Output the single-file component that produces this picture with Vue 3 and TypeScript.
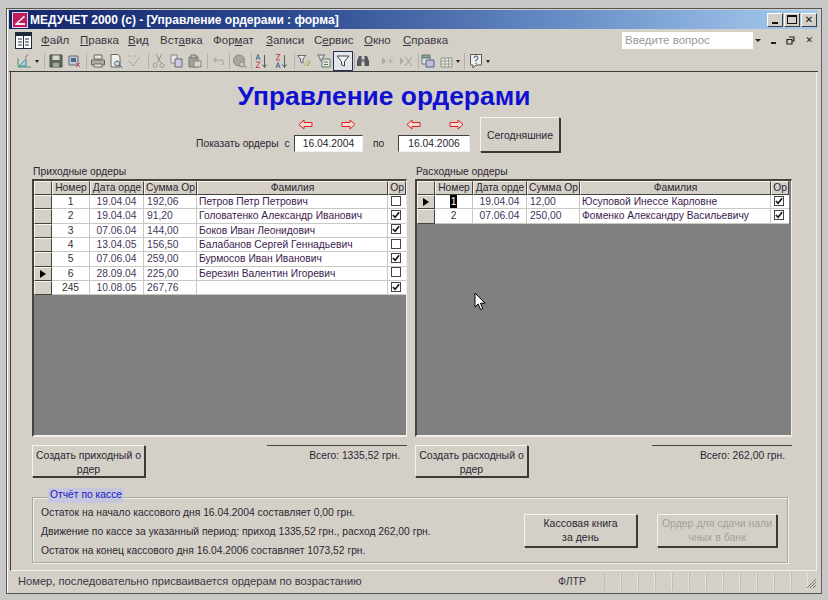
<script setup lang="ts">
type Shape = { d: string; f?: string; s?: string };
type Tool = { id: string; w: number; sep?: boolean; arrow?: boolean; active?: boolean; shapes?: Shape[] };

const tools: Tool[] = [
  { id: 'wiz', w: 25, arrow: true, shapes: [
    { d: 'M2 14V5M2 14H15', s: '#2f8a6a' }, { d: 'M3 13L10 6V13Z', f: '#9fd8c8', s: '#2f7f8f' }, { d: 'M9 5L12 1.5', s: '#c03a3a' } ] },
  { id: 's1', w: 7, sep: true },
  { id: 'save', w: 18, shapes: [
    { d: 'M2 2H14V14H2Z', f: '#4a5a4a', s: '#333' }, { d: 'M4.5 2.5H11.5V7H4.5Z', f: '#d8d8d0' }, { d: 'M5 10H11V14H5Z', f: '#9aa09a' } ] },
  { id: 'form', w: 18, shapes: [
    { d: 'M3 3H12V12H3Z', f: '#b9c9d4', s: '#556' }, { d: 'M5 5H10V9H5Z', f: '#3a5a7a' }, { d: 'M10 10L14 14M14 10L10 14', s: '#c2305a' } ] },
  { id: 's2', w: 6, sep: true },
  { id: 'print', w: 18, shapes: [
    { d: 'M4 2H12V6H4Z', f: '#e8e8e2', s: '#555' }, { d: 'M1.5 7H14.5V12H1.5Z', f: '#a8a8a0', s: '#555' }, { d: 'M4 11H12V14H4Z', f: '#eee', s: '#555' } ] },
  { id: 'prev', w: 18, shapes: [
    { d: 'M3 1.5H10L12 4V14H3Z', f: '#f4f4f0', s: '#555' }, { d: 'M9 8a2.5 2.5 0 1 0 .01 0Z', f: '#c8e0e8', s: '#345' }, { d: 'M11 12L14.5 15', s: '#345' } ] },
  { id: 'spell', w: 20, shapes: [
    { d: 'M2 3H5M7 3H10M12 3H14', s: '#a8a8a4' }, { d: 'M3 8L7 13L13 5', s: '#9c9c98' } ] },
  { id: 's3', w: 5, sep: true },
  { id: 'cut', w: 18, shapes: [
    { d: 'M5 1L10 10M11 1L6 10', s: '#8a8a88' }, { d: 'M4 10.5a2 2 0 1 0 .01 0ZM11 10.5a2 2 0 1 0 .01 0Z', s: '#8a8a88' } ] },
  { id: 'copy', w: 18, shapes: [
    { d: 'M2 2H8V10H2Z', f: '#ecece6', s: '#777' }, { d: 'M6 6H13V14H6Z', f: '#c9c9ea', s: '#556' } ] },
  { id: 'paste', w: 18, shapes: [
    { d: 'M2 4H11V14H2Z', f: '#9b9b90', s: '#666' }, { d: 'M4 2H9V5H4Z', f: '#bbb', s: '#666' }, { d: 'M7 8H14V14H7Z', f: '#d8d8d4', s: '#777' } ] },
  { id: 's4', w: 6, sep: true },
  { id: 'undo', w: 16, shapes: [ { d: 'M5 7H11Q13.5 7 13.5 10Q13.5 12 11 12M5 4.5V9.5L2.5 7Z', s: '#9c9c98' } ] },
  { id: 's5', w: 5, sep: true },
  { id: 'web', w: 18, shapes: [
    { d: 'M7 2a5.5 5.5 0 1 0 .01 0Z', f: '#a0a09a', s: '#777' }, { d: 'M10 9a2.5 2.5 0 1 0 .01 0Z', f: '#c8c8c4', s: '#777' }, { d: 'M11.5 12.5L15 15', s: '#777' } ] },
  { id: 's6', w: 3, sep: true },
  { id: 'az', w: 20, shapes: [
    { d: 'M3 7L5 1.5L7 7M3.8 5H6.2', s: '#2a5a9a' }, { d: 'M3 9H7L3 14.5H7', s: '#c03030' }, { d: 'M11.5 2V14M9.5 11.5L11.5 14.5L13.5 11.5', s: '#3a4a4a' } ] },
  { id: 'za', w: 20, shapes: [
    { d: 'M3 1.5H7L3 7H7', s: '#c03030' }, { d: 'M3 15L5 9.5L7 15M3.8 13H6.2', s: '#2a5a9a' }, { d: 'M11.5 2V14M9.5 11.5L11.5 14.5L13.5 11.5', s: '#3a4a4a' } ] },
  { id: 's7', w: 3, sep: true },
  { id: 'fsel', w: 20, shapes: [
    { d: 'M1.5 2.5H10L7 6V10L4.5 9V6Z', f: '#e8e8e2', s: '#556' }, { d: 'M8 13L13 6', s: '#c8b820' }, { d: 'M11 13L14.5 8', s: '#6a9a40' } ] },
  { id: 'fform', w: 18, shapes: [
    { d: 'M1.5 2H9L6.5 5V8L4 7V5Z', f: '#e8e8e2', s: '#556' }, { d: 'M6 6H14V14H6Z', f: '#e8eee4', s: '#4a6a5a' }, { d: 'M8 9H12M8 11.5H12', s: '#4a6a5a' } ] },
  { id: 'fapply', w: 20, active: true, shapes: [ { d: 'M2 3H14L9.5 8.5V13L6.5 12V8.5Z', f: '#f0f2f6', s: '#1a2a3a' } ] },
  { id: 's8', w: 1, sep: true },
  { id: 'find', w: 24, shapes: [
    { d: 'M2 8L4 3H6.5V13H2ZM9.5 3H12L14 8V13H9.5Z', f: '#3a4048' }, { d: 'M6 6H10V9H6Z', f: '#6a7078' } ] },
  { id: 'goto', w: 19, shapes: [ { d: 'M3 4L7 8L3 12Z', f: '#a4a4a0' }, { d: 'M9 8H14M11.5 5.5V10.5', s: '#a4a4a0' } ] },
  { id: 'del', w: 19, shapes: [ { d: 'M2 4L6 8L2 12Z', f: '#a4a4a0' }, { d: 'M7 4L14 13M14 4L7 13', s: '#949490' } ] },
  { id: 's9', w: 3, sep: true },
  { id: 'win', w: 18, shapes: [
    { d: 'M2 2H10V5H2Z', f: '#7a9a9a', s: '#4a6a6a' }, { d: 'M2 5H10V11H2Z', f: '#e8ecec', s: '#4a6a6a' }, { d: 'M6 7H14V14H6Z', f: '#b4bcdc', s: '#4a4a7a' } ] },
  { id: 'tbl', w: 24, arrow: true, shapes: [
    { d: 'M3 5H14V14H3Z', f: '#f0f0ea', s: '#7a8a7a' }, { d: 'M3 8H14M3 11H14M7 5V14M10.5 5V14', s: '#8a9a8a' } ] },
  { id: 's10', w: 6, sep: true },
  { id: 'help', w: 24, arrow: true, shapes: [
    { d: 'M2.5 1.5H13.5V12H8L5 15V12H2.5Z', f: '#f6f6f0', s: '#444' }, { d: 'M6 5Q6 3 8 3Q10 3 10 5Q10 6.5 8 7V8.5M8 9.8V11', s: '#1a2a6a' } ] },
];

const menu = [
  { pre: '', key: 'Ф', post: 'айл', w: 39 },
  { pre: '', key: 'П', post: 'равка', w: 48 },
  { pre: '', key: 'В', post: 'ид', w: 32 },
  { pre: 'Вст', key: 'а', post: 'вка', w: 53 },
  { pre: 'Фор', key: 'м', post: 'ат', w: 53 },
  { pre: '', key: 'З', post: 'аписи', w: 48 },
  { pre: 'С', key: 'е', post: 'рвис', w: 50 },
  { pre: '', key: 'О', post: 'кно', w: 39 },
  { pre: '', key: 'С', post: 'правка', w: 50 },
];

type Row = { n: string; d: string; s: string; name: string; ok: boolean; current?: boolean; selected?: boolean };
const income: Row[] = [
  { n: '1', d: '19.04.04', s: '192,06', name: 'Петров Петр Петрович', ok: false },
  { n: '2', d: '19.04.04', s: '91,20', name: 'Головатенко Александр Иванович', ok: true },
  { n: '3', d: '07.06.04', s: '144,00', name: 'Боков Иван Леонидович', ok: true },
  { n: '4', d: '13.04.05', s: '156,50', name: 'Балабанов Сергей Геннадьевич', ok: false },
  { n: '5', d: '07.06.04', s: '259,00', name: 'Бурмосов Иван Иванович', ok: true },
  { n: '6', d: '28.09.04', s: '225,00', name: 'Березин Валентин Игоревич', ok: false, current: true },
  { n: '245', d: '10.08.05', s: '267,76', name: '', ok: true },
];
const outcome: Row[] = [
  { n: '1', d: '19.04.04', s: '12,00', name: 'Юсуповой Инессе Карловне', ok: true, current: true, selected: true },
  { n: '2', d: '07.06.04', s: '250,00', name: 'Фоменко Александру Васильевичу', ok: true },
];
const panels = [
  { title: 'Приходные ордеры', rows: income, btn: ['Создать приходный о', 'рдер'], total: 'Всего: 1335,52 грн.' },
  { title: 'Расходные ордеры', rows: outcome, btn: ['Создать расходный о', 'рдер'], total: 'Всего: 262,00 грн.' },
];
const cells = Array.from({ length: 12 }, (_, i) => i);
</script>

<template>
  <div class="shell">
    <div class="win">
      <div class="title">
        <svg class="logo" width="16" height="16" viewBox="0 0 16 16">
          <rect width="16" height="16" fill="#d8d8e4" />
          <rect x="1" y="1" width="14" height="14" fill="#c21a5a" />
          <path d="M3 12L12 3.5L13 5L6 11L13 11V13H3Z" fill="#f4e8ee" />
        </svg>
        <span class="title-text">МЕДУЧЕТ 2000 (с) - [Управление ордерами : форма]</span>
        <div class="caps">
          <button class="cap"><span class="c-min"></span></button>
          <button class="cap"><span class="c-max"></span></button>
          <button class="cap c-x">✕</button>
        </div>
      </div>

      <div class="menubar">
        <div class="doc-ico">
          <svg width="17" height="17" viewBox="0 0 17 17">
            <rect x="0.5" y="0.5" width="16" height="16" fill="#fff" stroke="#1c2a3a" />
            <path d="M1 1H16V4H1Z" fill="#1c2a3a" />
            <path d="M8.5 4V16M3 7H7M3 10H7M3 13H7M10 7H14M10 10H14M10 13H14" stroke="#1c2a3a" fill="none" />
          </svg>
        </div>
        <span v-for="m in menu" :key="m.pre + m.key" class="mi" :style="{ width: m.w + 'px' }">{{ m.pre }}<u>{{ m.key }}</u>{{ m.post }}</span>
        <div class="spring"></div>
        <div class="ask">
          <span class="ask-text">Введите вопрос</span>
          <span class="ask-drop"></span>
        </div>
        <div class="doc-caps">
          <span class="d-min"></span>
          <svg width="9" height="9" viewBox="0 0 9 9"><path d="M3 1H8V5H6.5M1 3.5H6V8H1Z" fill="none" stroke="#222" stroke-width="1.2" /></svg>
          <span class="d-x">✕</span>
        </div>
      </div>

      <div class="toolbar">
        <template v-for="t in tools" :key="t.id">
          <span v-if="t.sep" class="sep" :style="{ width: t.w + 'px' }"></span>
          <span v-else class="tool" :class="{ active: t.active }" :style="{ width: t.w + 'px' }">
            <svg width="16" height="16" viewBox="0 0 16 16">
              <path v-for="(p, i) in t.shapes" :key="i" :d="p.d" :fill="p.f || 'none'" :stroke="p.s || 'none'" />
            </svg>
            <i v-if="t.arrow" class="drop"></i>
          </span>
        </template>
      </div>

      <div class="form">
        <h1 class="heading">Управление ордерами</h1>

        <div class="filter">
          <span class="f-label">Показать ордеры&nbsp; с</span>
          <div class="datebox first">
            <div class="arrows">
              <svg width="15" height="11" viewBox="0 0 15 11"><path d="M1 5.5L6 1V3.5H14V7.5H6V10Z" fill="#f2dcd4" stroke="#e02020" /></svg>
              <svg width="15" height="11" viewBox="0 0 15 11"><path d="M14 5.5L9 1V3.5H1V7.5H9V10Z" fill="#f2dcd4" stroke="#e02020" /></svg>
            </div>
            <div class="input">16.04.2004</div>
          </div>
          <span class="f-po">по</span>
          <div class="datebox second">
            <div class="arrows">
              <svg width="15" height="11" viewBox="0 0 15 11"><path d="M1 5.5L6 1V3.5H14V7.5H6V10Z" fill="#f2dcd4" stroke="#e02020" /></svg>
              <svg width="15" height="11" viewBox="0 0 15 11"><path d="M14 5.5L9 1V3.5H1V7.5H9V10Z" fill="#f2dcd4" stroke="#e02020" /></svg>
            </div>
            <div class="input">16.04.2006</div>
          </div>
          <button class="btn today">Сегодняшние</button>
        </div>

        <div class="panels">
          <section v-for="p in panels" :key="p.title" class="panel">
            <div class="p-title">{{ p.title }}</div>
            <div class="grid">
              <div class="row head">
                <span class="sel"></span>
                <span class="h">Номер</span>
                <span class="h">Дата орде</span>
                <span class="h hl">Сумма Ор</span>
                <span class="h">Фамилия</span>
                <span class="h">Ор</span>
              </div>
              <div v-for="r in p.rows" :key="r.n" class="row body">
                <span class="sel"><i v-if="r.current" class="ptr"></i></span>
                <span class="c cn"><b v-if="r.selected" class="selected">{{ r.n }}</b><template v-else>{{ r.n }}</template></span>
                <span class="c cd">{{ r.d }}</span>
                <span class="c cs">{{ r.s }}</span>
                <span class="c cf">{{ r.name }}</span>
                <span class="c ck"><i class="check"><svg v-if="r.ok" width="8" height="8" viewBox="0 0 9 9"><path d="M1 4.5L3.5 7L8 1.5" fill="none" stroke="#111" stroke-width="1.8" /></svg></i></span>
              </div>
            </div>
            <div class="p-foot">
              <button class="btn create">{{ p.btn[0] }}<br />{{ p.btn[1] }}</button>
              <div class="total">{{ p.total }}</div>
            </div>
          </section>
        </div>

        <div class="report">
          <span class="legend">Отчёт по кассе</span>
          <div class="lines">
            <p>Остаток на начало кассового дня 16.04.2004 составляет 0,00 грн.</p>
            <p>Движение по кассе за указанный период: приход 1335,52 грн., расход 262,00 грн.</p>
            <p>Остаток на конец кассового дня 16.04.2006 составляет 1073,52 грн.</p>
          </div>
          <button class="btn rep">Кассовая книга<br />за день</button>
          <button class="btn rep dis">Ордер для сдачи нали<br />чных в банк</button>
        </div>
      </div>

      <div class="status">
        <span class="st-main">Номер, последовательно присваивается ордерам по возрастанию</span>
        <span class="st-flt">ФЛТР</span>
        <span v-for="c in cells" :key="c" class="st-cell"></span>
        <svg class="grip" width="12" height="12" viewBox="0 0 12 12"><path d="M11 2L2 11M11 5L5 11M11 8L8 11" stroke="#777" fill="none" /></svg>
      </div>
    </div>

    <svg class="cursor" width="12" height="19" viewBox="0 0 12 19">
      <path d="M1 1V15L4.2 12L6.5 17.5L8.8 16.5L6.5 11.2H11Z" fill="#fff" stroke="#000" />
    </svg>
  </div>
</template>

<style>
html, body { margin: 0; background: #c4c4c2; }
</style>

<style scoped>
* { box-sizing: border-box; }
.shell {
  position: relative;
  width: 828px;
  height: 600px;
  padding: 8px 6px 6px 6px;
  background: #c8c8c6;
  font-family: "Liberation Sans", Arial, sans-serif;
  font-size: 10.3px;
  color: #2c2630;
  overflow: hidden;
}
.win {
  height: 586px;
  border: 1px solid #55554f;
  border-right-color: #606060;
  background: #d4d0c8;
  padding: 1px 3px 2px 2px;
  display: flex;
  flex-direction: column;
  box-shadow: inset 1px 0 #fff;
}
.title {
  height: 19px;
  flex: none;
  display: flex;
  align-items: center;
  padding-left: 3px;
  background: linear-gradient(90deg, #14246a 0%, #2c4a90 35%, #6a90c8 70%, #a8cdf0 100%);
}
.logo { flex: none; }
.title-text {
  margin-left: 2px;
  color: #fff;
  font-weight: 700;
  font-size: 12px;
  white-space: nowrap;
}
.caps { margin-left: auto; display: flex; gap: 1px; padding-right: 1px; }
.cap {
  width: 16px;
  height: 14px;
  padding: 0;
  background: #d4d0c8;
  border: 1px solid;
  border-color: #fff #404040 #404040 #fff;
  font-size: 10px;
  font-weight: 700;
  color: #111;
  display: flex;
  align-items: center;
  justify-content: center;
  font-family: "DejaVu Sans", sans-serif;
}
.c-min { width: 6px; height: 2px; background: #111; margin-top: 6px; }
.c-max { width: 10px; height: 9px; border: 1px solid #111; border-top-width: 2px; }

.menubar {
  height: 22px;
  flex: none;
  display: flex;
  align-items: center;
  padding-left: 6px;
  font-size: 11.5px;
  color: #3a3640;
}
.doc-ico { width: 26px; flex: none; display: flex; }
.mi { flex: none; white-space: nowrap; }
.mi u { text-underline-offset: 1px; }
.spring { flex: 1; }
.ask {
  width: 141px;
  height: 17px;
  background: #fff;
  display: flex;
  align-items: center;
  justify-content: space-between;
  padding-left: 3px;
  color: #9a9a9a;
  font-size: 11.5px;
}
.ask-drop {
  width: 10px;
  height: 100%;
  background: #d4d0c8;
  position: relative;
}
.ask-drop::after {
  content: "";
  position: absolute;
  left: 2px;
  top: 7px;
  border: 3px solid transparent;
  border-top: 3px solid #222;
}
.doc-caps {
  width: 55px;
  display: flex;
  align-items: center;
  justify-content: space-between;
  padding: 0 5px 0 8px;
}
.d-min { width: 5px; height: 2px; background: #222; margin-top: 6px; }
.d-x { font-size: 9px; font-weight: 700; color: #222; font-family: "DejaVu Sans", sans-serif; }

.toolbar {
  height: 21px;
  flex: none;
  display: flex;
  align-items: center;
  padding-left: 6px;
  border-bottom: 1px solid #3c3c38;
}
.tool {
  flex: none;
  height: 20px;
  display: flex;
  align-items: center;
  justify-content: flex-start;
  position: relative;
  padding-left: 1px;
}
.tool svg { opacity: 0.85; }
.tool.active {
  background: #e6e6ea;
  border: 1px solid #20305a;
  justify-content: center;
  padding-left: 0;
}
.drop {
  position: absolute;
  right: 1px;
  top: 9px;
  border: 2.5px solid transparent;
  border-top: 3px solid #222;
}
.sep { flex: none; height: 16px; position: relative; }
.sep::after {
  content: "";
  position: absolute;
  left: 50%;
  top: 0;
  width: 1px;
  height: 16px;
  background: #b4b0a8;
}

.form {
  flex: 1;
  min-height: 0;
  margin: 0 1px;
  border-left: 1px solid #3c3c38;
  border-right: 1px solid #f0efe9;
  border-bottom: 1px solid #f0efe9;
  display: flex;
  flex-direction: column;
  padding-left: 21px;
}
.heading {
  margin: 8px 0 0 0;
  padding-right: 80px;
  text-align: center;
  color: #1010d0;
  font-size: 26.4px;
  line-height: 32px;
  font-weight: 700;
}
.filter {
  display: flex;
  align-items: flex-end;
  margin: 4px 0 0 164px;
  height: 36px;
}
.f-label { width: 98px; height: 17px; line-height: 17px; flex: none; white-space: nowrap; }
.f-po { width: 35px; padding-left: 10px; height: 17px; line-height: 17px; flex: none; }
.datebox { flex: none; width: 69px; display: flex; flex-direction: column; }
.datebox.second { width: 72px; }
.arrows {
  height: 19px;
  display: flex;
  gap: 28px;
  padding-top: 3px;
  padding-left: 4px;
}
.second .arrows { padding-left: 8px; }
.input {
  height: 17px;
  background: #fff;
  border: 1px solid;
  border-color: #404040 #f0f0f0 #f0f0f0 #404040;
  text-align: center;
  line-height: 15px;
}
.btn {
  background: #d4d0c8;
  border: 1px solid;
  border-color: #f4f3ee #3a3a36 #3a3a36 #f4f3ee;
  box-shadow: 1px 1px 0 #3a3a36;
  font-family: inherit;
  font-size: 10.5px;
  color: #2c2630;
  padding: 0;
  line-height: 14px;
}
.today { width: 80px; height: 35px; margin-left: 10px; flex: none; }

.panels { display: flex; gap: 8px; margin-top: 13px; }
.panel { width: 375px; flex: none; }
.panel + .panel { width: 377px; }
.p-title { height: 14px; line-height: 14px; padding-left: 1px; }
.grid {
  height: 258px;
  background: #808080;
  border: 1px solid;
  border-width: 2px 1px 2px 2px;
  border-color: #44443f #f0efe9 #f0efe9 #44443f;
}
.row {
  display: grid;
  grid-template-columns: 18px 38px 54px 53px 191px 18px;
  height: 14px;
  width: 372px;
  line-height: 14px;
}
.row.body { height: 14.33px; }
.sel {
  background: #d4d0c8;
  border: 1px solid;
  border-color: #f4f3ee #44443f #44443f #f4f3ee;
  display: flex;
  align-items: center;
  justify-content: center;
}
.head .h {
  background: #d4d0c8;
  border: 1px solid;
  border-color: #f4f3ee #44443f #44443f #f4f3ee;
  text-align: center;
  overflow: hidden;
  white-space: nowrap;
  line-height: 12px;
}
.head .hl { text-align: left; padding-left: 1px; }
.c {
  background: #fff;
  border-right: 1px solid #c8c8c4;
  border-bottom: 1px solid #c8c8c4;
  white-space: nowrap;
  overflow: hidden;
  color: #4a2a5a;
}
.cn { text-align: center; color: #333; }
.cd { text-align: center; color: #44365a; }
.cs { padding-left: 3px; color: #44365a; }
.cf { padding-left: 2px; color: #3c1c50; }
.ck { display: flex; align-items: center; justify-content: center; border-right: 0; padding-right: 2px; }
.selected { background: #000; color: #fff; font-weight: 400; padding: 0 1px; display: inline-block; height: 13px; }
.check {
  width: 10px;
  height: 10px;
  display: flex;
  align-items: center;
  justify-content: center;
  background: #fff;
  border: 1px solid #444;
  margin-top: -2px;
}
.ptr {
  border-left: 6px solid #000;
  border-top: 4px solid transparent;
  border-bottom: 4px solid transparent;
}
.p-foot { display: flex; justify-content: space-between; margin-top: 8px; height: 33px; }
.create { width: 113px; height: 32px; flex: none; padding-top: 1px; }
.total {
  width: 140px;
  height: 20px;
  border-top: 1px solid #44443f;
  text-align: right;
  padding: 4px 7px 0 0;
}
.report {
  position: relative;
  width: 756px;
  height: 66px;
  margin-top: 19px;
  padding: 0 10px 0 8px;
  border: 1px solid #a8a8a2;
  box-shadow: inset 1px 1px 0 #f0efe9, 1px 1px 0 #f0efe9;
  display: flex;
  align-items: center;
}
.legend {
  position: absolute;
  left: 15px;
  top: -10px;
  width: 76px;
  height: 15px;
  padding-left: 2px;
  line-height: 14px;
  color: #1818c8;
  background: #c6c6dc;
}
.lines { flex: 1; margin-top: 3px; }
.lines p { margin: 0; height: 19px; line-height: 19px; }
.rep { width: 113px; height: 33px; flex: none; }
.dis { width: 120px; margin-left: 20px; color: #a2a09a; }

.status {
  height: 20px;
  flex: none;
  display: flex;
  align-items: center;
  padding-left: 9px;
  font-size: 11.15px;
  color: #3a3640;
  position: relative;
}
.st-main { width: 536px; flex: none; white-space: nowrap; }
.st-flt { width: 50px; flex: none; padding-left: 4px; font-size: 10.5px; }
.st-cell { width: 17px; height: 17px; flex: none; border-right: 1px solid #e4e2dc; border-left: 1px solid #c0bdb6; }
.grip { position: absolute; right: 1px; bottom: 2px; }
.cursor { position: absolute; left: 474px; top: 292px; }
</style>
